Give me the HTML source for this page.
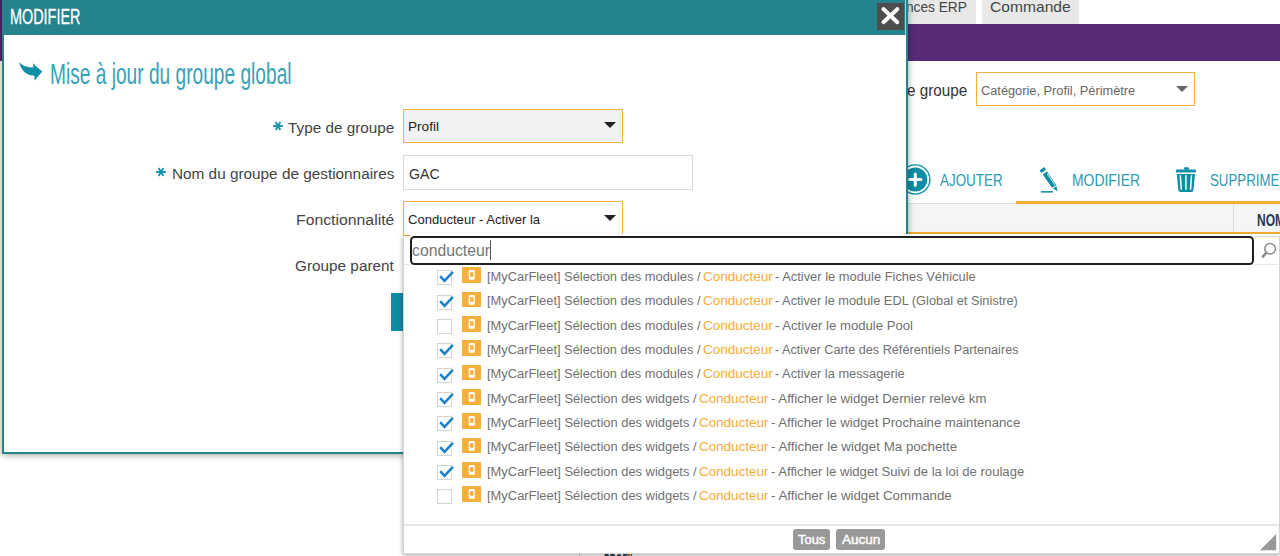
<!DOCTYPE html>
<html lang="fr"><head><meta charset="utf-8"><title>Modifier</title>
<style>
html,body{margin:0;padding:0}
body{width:1280px;height:556px;overflow:hidden;position:relative;background:#fff;font-family:"Liberation Sans",sans-serif}
.a{position:absolute;box-sizing:border-box}
.t{position:absolute;white-space:nowrap;line-height:1;transform-origin:0 0}
svg{position:absolute;overflow:visible}
.cb{position:absolute;box-sizing:border-box;width:15px;height:15px;border:1px solid #d4d4d4;background:#fff;left:437px}
.ic{position:absolute;left:462.3px;width:18.7px;height:15.8px;background:#f6b03a}
.sel{position:absolute;box-sizing:border-box;border:1px solid #f4af47;background:#fff}
.arr{position:absolute;width:0;height:0;border-left:6px solid transparent;border-right:6px solid transparent;border-top:6px solid #222}
</style></head>
<body>
<div class="a" style="left:0;top:0;width:2.4px;height:61px;background:#5a2370"></div>
<div class="a" style="left:880px;top:0;width:95.8px;height:23.6px;background:#e8e8e8"></div>
<div class="a" style="left:982px;top:0;width:97.2px;height:23.6px;background:#e8e8e8"></div>
<div class="a" style="left:900px;top:23.6px;width:380px;height:37.4px;background:#5b2a77"></div>
<span class="t" style="left:906.11px;top:-1px;font-size:15px;color:#444;transform:scaleX(0.9130);">nces ERP</span>
<span class="t" style="left:990.02px;top:-1px;font-size:15px;color:#444;transform:scaleX(1.0404);">Commande</span>
<span class="t" style="left:906.59px;top:83px;font-size:15.6px;color:#333;transform:scaleX(0.9765);">e groupe</span>
<div class="sel" style="left:976px;top:72px;width:219px;height:34px"></div>
<span class="t" style="left:980.96px;top:85px;font-size:12px;color:#666;transform:scaleX(1.0656);">Catégorie, Profil, Périmètre</span>
<div class="arr" style="left:1176px;top:86.3px;border-top-color:#666"></div>
<svg style="left:899px;top:163px" width="33" height="33" viewBox="0 0 33 33"><circle cx="16.3" cy="16.5" r="14.6" fill="none" stroke="#0d8ea4" stroke-width="1.3"/><circle cx="16.3" cy="16.5" r="12" fill="#0d8ea4"/><path d="M16.3 10.9v11.4M10.6 16.6h11.4" stroke="#fff" stroke-width="3" stroke-linecap="round"/></svg>
<span class="t" style="left:939.60px;top:173px;font-size:15.6px;color:#2a9bb1;transform:scaleX(0.8603);">AJOUTER</span>
<svg style="left:1036px;top:164px" width="26" height="32" viewBox="0 0 26 32">
<g transform="translate(6.8,6.05) rotate(-34.8)" fill="#0d8ea4">
<rect x="-2.95" y="-1.6" width="5.9" height="3.2" rx="0.9"/>
<rect x="-2.6" y="3.6" width="5.2" height="16.3"/>
<rect x="1.05" y="5.6" width="0.9" height="13.4" fill="#e3f2f4"/>
<path d="M-2.1 21h4.2L0 25.8z"/>
</g>
<rect x="4.9" y="27.1" width="12" height="1.5" fill="#0d8ea4"/>
</svg>
<span class="t" style="left:1071.89px;top:173px;font-size:15.6px;color:#2a9bb1;transform:scaleX(0.8929);">MODIFIER</span>
<svg style="left:1174px;top:166px" width="24" height="28" viewBox="0 0 24 28" fill="#0d8ea4">
<rect x="10" y="1.3" width="5" height="2.4" rx="1.1"/>
<rect x="1.8" y="3.6" width="20.2" height="3" rx="1.4"/>
<path d="M2.8 8h18.2l-1.6 16.2a2 2 0 0 1-2 1.8H6.4a2 2 0 0 1-2-1.8z"/>
<path d="M6.3 9.2l1 14.6M11.9 9.2v14.6M17.5 9.2l-1 14.6" stroke="#fff" stroke-width="1.5" fill="none"/>
</svg>
<span class="t" style="left:1209.70px;top:173px;font-size:15.6px;color:#2a9bb1;transform:scaleX(0.8526);clip-path:inset(0 12% 0 0);">SUPPRIMER</span>
<div class="a" style="left:908px;top:203px;width:372px;height:1px;background:#ddd"></div>
<div class="a" style="left:1016.4px;top:200.7px;width:264px;height:3px;background:#f5ad32"></div>
<div class="a" style="left:908px;top:203.8px;width:372px;height:28.2px;background:#f5f5f5"></div>
<div class="a" style="left:1233px;top:204px;width:1px;height:28px;background:#dcdcdc"></div>
<div class="a" style="left:908px;top:231.9px;width:372px;height:2.2px;background:#f5ad32"></div>
<span class="t" style="left:1257.22px;top:212px;font-size:16.2px;color:#2c3a4b;font-weight:bold;transform:scaleX(0.7435);">NOM</span>
<div class="a" style="left:579px;top:540px;width:1px;height:16px;background:#d0d0d0"></div>
<span class="t" style="left:603.75px;top:552px;font-size:16.2px;color:#2c3a4b;font-weight:bold;transform:scaleX(0.5239);">PROFIL</span>
<div class="a" style="left:2px;top:-2px;width:906.2px;height:456px;border:2px solid #25838d;background:#fff;box-shadow:0 1px 7px rgba(0,0,0,.38)"></div>
<div class="a" style="left:2px;top:0;width:903.2px;height:35px;background:#25838d"></div>
<div class="a" style="left:905.2px;top:0;width:1.3px;height:35px;background:#a9d2d6"></div>
<span class="t" style="left:9.55px;top:6px;font-size:22.3px;color:#fff;transform:scaleX(0.6463);-webkit-text-stroke:0.3px #fff;">MODIFIER</span>
<div class="a" style="left:877px;top:3px;width:27px;height:27px;background:#4d4d4d"></div>
<svg style="left:877px;top:3px" width="27" height="27" viewBox="0 0 27 27"><path d="M6.5 6.1L20.3 19.2M20.3 6.1L6.5 19.2" stroke="#fff" stroke-width="4" stroke-linecap="round"/></svg>
<svg style="left:18px;top:60px" width="26" height="22" viewBox="0 0 26 22"><path d="M1 2.3C5.2 6.4 10.5 7.8 15.6 7.3L14.6 3.2 24.3 11.4 16.6 20.4 16.3 15.4C9.6 16.2 3.6 11.6 1 2.3z" fill="#0d8ea4"/></svg>
<span class="t" style="left:49.72px;top:60px;font-size:28.6px;color:#38a1b7;transform:scaleX(0.6694);">Mise à jour du groupe global</span>
<svg style="left:271.70px;top:119.80px" width="12" height="12" viewBox="-6 -6 12 12"><path d="M-4.9 0H4.9M-2.35 -4.07L2.35 4.07M2.35 -4.07L-2.35 4.07" stroke="#1b94b1" stroke-width="1.9" fill="none"/></svg>
<span class="t" style="left:288.09px;top:120px;font-size:15.2px;color:#444;transform:scaleX(1.0071);">Type de groupe</span>
<svg style="left:155.20px;top:166.00px" width="12" height="12" viewBox="-6 -6 12 12"><path d="M-4.9 0H4.9M-2.35 -4.07L2.35 4.07M2.35 -4.07L-2.35 4.07" stroke="#1b94b1" stroke-width="1.9" fill="none"/></svg>
<span class="t" style="left:171.77px;top:166px;font-size:15.2px;color:#444;transform:scaleX(1.0091);">Nom du groupe de gestionnaires</span>
<span class="t" style="left:296.14px;top:212px;font-size:15.2px;color:#444;transform:scaleX(1.0397);">Fonctionnalité</span>
<span class="t" style="left:294.73px;top:258px;font-size:15.2px;color:#444;transform:scaleX(1.0090);">Groupe parent</span>
<div class="sel" style="left:403px;top:109px;width:220.3px;height:34px;background:#f2f2f2"></div>
<span class="t" style="left:408.31px;top:120px;font-size:13px;color:#222;transform:scaleX(1.0473);">Profil</span>
<div class="arr" style="left:604px;top:122px"></div>
<div class="a" style="left:403px;top:155px;width:290px;height:34.6px;border:1px solid #d9d9d9;background:#fff"></div>
<span class="t" style="left:409.29px;top:166px;font-size:15px;color:#333;transform:scaleX(0.9455);">GAC</span>
<div class="sel" style="left:403px;top:201px;width:220.3px;height:35px"></div>
<span class="t" style="left:408.45px;top:213px;font-size:13px;color:#222;transform:scaleX(1.0042);">Conducteur - Activer la</span>
<div class="arr" style="left:604px;top:214.6px"></div>
<div class="a" style="left:391.3px;top:292.7px;width:110px;height:38px;background:#0c8ca2"></div>
<span class="t" style="left:410.80px;top:304px;font-size:15px;color:#fff;">Enregistrer</span>
<div class="a" style="left:403px;top:236px;width:877px;height:318px;background:#fff;border:1px solid #d4d4d4;border-top:0;box-shadow:0 1px 5px rgba(0,0,0,.35)"></div>
<div class="a" style="left:410px;top:234.2px;width:870px;height:2px;background:#fff"></div>
<div class="a" style="left:404.3px;top:264px;width:874px;height:1px;background:#e6e6e6"></div>
<div class="a" style="left:1254.5px;top:235.8px;width:24.6px;height:1px;background:#dcdcdc"></div>
<div class="a" style="left:410px;top:236px;width:844px;height:29px;border:2px solid #1f1f1f;border-radius:4.5px;background:#fff"></div>
<span class="t" style="left:412.27px;top:242px;font-size:16.5px;color:#757575;transform:scaleX(0.9556);">conducteur</span>
<div class="a" style="left:490.2px;top:240px;width:1px;height:19.6px;background:#555"></div>
<svg style="left:1259px;top:240px" width="20" height="20" viewBox="0 0 20 20"><circle cx="11.1" cy="8.7" r="5.3" fill="none" stroke="#8c8c8c" stroke-width="1.5"/><path d="M7.2 12.9L3.9 16.6" stroke="#8c8c8c" stroke-width="2.6" stroke-linecap="round"/></svg>
<div class="cb" style="top:270.20px"></div>
<svg style="left:437px;top:270.20px" width="18" height="15" viewBox="0 0 18 15"><path d="M3.2 6.2l4.3 4.7 8.4-9" fill="none" stroke="#1c80cc" stroke-width="2.5"/></svg>
<div class="ic" style="top:267.20px"></div>
<svg style="left:462.3px;top:267.20px" width="19" height="16" viewBox="0 0 19 16"><rect x="6.7" y="3" width="6.1" height="9.8" rx="1.3" fill="#fff"/><rect x="8.1" y="5.2" width="3.3" height="4.6" fill="#f6b03a"/></svg>
<span class="t" style="left:486.60px;top:271px;font-size:12px;color:#707070;transform:scaleX(1.0710);">[MyCarFleet] Sélection des modules /</span>
<span class="t" style="left:702.92px;top:271px;font-size:12px;color:#f6ac38;transform:scaleX(1.1258);">Conducteur</span>
<span class="t" style="left:775.42px;top:271px;font-size:12px;color:#707070;transform:scaleX(1.0747);">- Activer le module Fiches Véhicule</span>
<div class="cb" style="top:294.55px"></div>
<svg style="left:437px;top:294.55px" width="18" height="15" viewBox="0 0 18 15"><path d="M3.2 6.2l4.3 4.7 8.4-9" fill="none" stroke="#1c80cc" stroke-width="2.5"/></svg>
<div class="ic" style="top:291.55px"></div>
<svg style="left:462.3px;top:291.55px" width="19" height="16" viewBox="0 0 19 16"><rect x="6.7" y="3" width="6.1" height="9.8" rx="1.3" fill="#fff"/><rect x="8.1" y="5.2" width="3.3" height="4.6" fill="#f6b03a"/></svg>
<span class="t" style="left:486.60px;top:295px;font-size:12px;color:#707070;transform:scaleX(1.0710);">[MyCarFleet] Sélection des modules /</span>
<span class="t" style="left:702.92px;top:295px;font-size:12px;color:#f6ac38;transform:scaleX(1.1258);">Conducteur</span>
<span class="t" style="left:775.42px;top:295px;font-size:12px;color:#707070;transform:scaleX(1.0668);">- Activer le module EDL (Global et Sinistre)</span>
<div class="cb" style="top:318.90px"></div>
<div class="ic" style="top:315.90px"></div>
<svg style="left:462.3px;top:315.90px" width="19" height="16" viewBox="0 0 19 16"><rect x="6.7" y="3" width="6.1" height="9.8" rx="1.3" fill="#fff"/><rect x="8.1" y="5.2" width="3.3" height="4.6" fill="#f6b03a"/></svg>
<span class="t" style="left:486.60px;top:320px;font-size:12px;color:#707070;transform:scaleX(1.0710);">[MyCarFleet] Sélection des modules /</span>
<span class="t" style="left:702.92px;top:320px;font-size:12px;color:#f6ac38;transform:scaleX(1.1258);">Conducteur</span>
<span class="t" style="left:775.41px;top:320px;font-size:12px;color:#707070;transform:scaleX(1.0943);">- Activer le module Pool</span>
<div class="cb" style="top:343.25px"></div>
<svg style="left:437px;top:343.25px" width="18" height="15" viewBox="0 0 18 15"><path d="M3.2 6.2l4.3 4.7 8.4-9" fill="none" stroke="#1c80cc" stroke-width="2.5"/></svg>
<div class="ic" style="top:340.25px"></div>
<svg style="left:462.3px;top:340.25px" width="19" height="16" viewBox="0 0 19 16"><rect x="6.7" y="3" width="6.1" height="9.8" rx="1.3" fill="#fff"/><rect x="8.1" y="5.2" width="3.3" height="4.6" fill="#f6b03a"/></svg>
<span class="t" style="left:486.60px;top:344px;font-size:12px;color:#707070;transform:scaleX(1.0710);">[MyCarFleet] Sélection des modules /</span>
<span class="t" style="left:702.92px;top:344px;font-size:12px;color:#f6ac38;transform:scaleX(1.1258);">Conducteur</span>
<span class="t" style="left:775.43px;top:344px;font-size:12px;color:#707070;transform:scaleX(1.0553);">- Activer Carte des Référentiels Partenaires</span>
<div class="cb" style="top:367.60px"></div>
<svg style="left:437px;top:367.60px" width="18" height="15" viewBox="0 0 18 15"><path d="M3.2 6.2l4.3 4.7 8.4-9" fill="none" stroke="#1c80cc" stroke-width="2.5"/></svg>
<div class="ic" style="top:364.60px"></div>
<svg style="left:462.3px;top:364.60px" width="19" height="16" viewBox="0 0 19 16"><rect x="6.7" y="3" width="6.1" height="9.8" rx="1.3" fill="#fff"/><rect x="8.1" y="5.2" width="3.3" height="4.6" fill="#f6b03a"/></svg>
<span class="t" style="left:486.60px;top:368px;font-size:12px;color:#707070;transform:scaleX(1.0710);">[MyCarFleet] Sélection des modules /</span>
<span class="t" style="left:702.92px;top:368px;font-size:12px;color:#f6ac38;transform:scaleX(1.1258);">Conducteur</span>
<span class="t" style="left:775.42px;top:368px;font-size:12px;color:#707070;transform:scaleX(1.0682);">- Activer la messagerie</span>
<div class="cb" style="top:391.95px"></div>
<svg style="left:437px;top:391.95px" width="18" height="15" viewBox="0 0 18 15"><path d="M3.2 6.2l4.3 4.7 8.4-9" fill="none" stroke="#1c80cc" stroke-width="2.5"/></svg>
<div class="ic" style="top:388.95px"></div>
<svg style="left:462.3px;top:388.95px" width="19" height="16" viewBox="0 0 19 16"><rect x="6.7" y="3" width="6.1" height="9.8" rx="1.3" fill="#fff"/><rect x="8.1" y="5.2" width="3.3" height="4.6" fill="#f6b03a"/></svg>
<span class="t" style="left:486.60px;top:393px;font-size:12px;color:#707070;transform:scaleX(1.0762);">[MyCarFleet] Sélection des widgets /</span>
<span class="t" style="left:698.93px;top:393px;font-size:12px;color:#f6ac38;transform:scaleX(1.1176);">Conducteur</span>
<span class="t" style="left:770.91px;top:393px;font-size:12px;color:#707070;transform:scaleX(1.0998);">- Afficher le widget Dernier relevé km</span>
<div class="cb" style="top:416.30px"></div>
<svg style="left:437px;top:416.30px" width="18" height="15" viewBox="0 0 18 15"><path d="M3.2 6.2l4.3 4.7 8.4-9" fill="none" stroke="#1c80cc" stroke-width="2.5"/></svg>
<div class="ic" style="top:413.30px"></div>
<svg style="left:462.3px;top:413.30px" width="19" height="16" viewBox="0 0 19 16"><rect x="6.7" y="3" width="6.1" height="9.8" rx="1.3" fill="#fff"/><rect x="8.1" y="5.2" width="3.3" height="4.6" fill="#f6b03a"/></svg>
<span class="t" style="left:486.60px;top:417px;font-size:12px;color:#707070;transform:scaleX(1.0762);">[MyCarFleet] Sélection des widgets /</span>
<span class="t" style="left:698.93px;top:417px;font-size:12px;color:#f6ac38;transform:scaleX(1.1176);">Conducteur</span>
<span class="t" style="left:770.91px;top:417px;font-size:12px;color:#707070;transform:scaleX(1.0967);">- Afficher le widget Prochaine maintenance</span>
<div class="cb" style="top:440.65px"></div>
<svg style="left:437px;top:440.65px" width="18" height="15" viewBox="0 0 18 15"><path d="M3.2 6.2l4.3 4.7 8.4-9" fill="none" stroke="#1c80cc" stroke-width="2.5"/></svg>
<div class="ic" style="top:437.65px"></div>
<svg style="left:462.3px;top:437.65px" width="19" height="16" viewBox="0 0 19 16"><rect x="6.7" y="3" width="6.1" height="9.8" rx="1.3" fill="#fff"/><rect x="8.1" y="5.2" width="3.3" height="4.6" fill="#f6b03a"/></svg>
<span class="t" style="left:486.60px;top:441px;font-size:12px;color:#707070;transform:scaleX(1.0762);">[MyCarFleet] Sélection des widgets /</span>
<span class="t" style="left:698.93px;top:441px;font-size:12px;color:#f6ac38;transform:scaleX(1.1176);">Conducteur</span>
<span class="t" style="left:770.90px;top:441px;font-size:12px;color:#707070;transform:scaleX(1.1135);">- Afficher le widget Ma pochette</span>
<div class="cb" style="top:465.00px"></div>
<svg style="left:437px;top:465.00px" width="18" height="15" viewBox="0 0 18 15"><path d="M3.2 6.2l4.3 4.7 8.4-9" fill="none" stroke="#1c80cc" stroke-width="2.5"/></svg>
<div class="ic" style="top:462.00px"></div>
<svg style="left:462.3px;top:462.00px" width="19" height="16" viewBox="0 0 19 16"><rect x="6.7" y="3" width="6.1" height="9.8" rx="1.3" fill="#fff"/><rect x="8.1" y="5.2" width="3.3" height="4.6" fill="#f6b03a"/></svg>
<span class="t" style="left:486.60px;top:466px;font-size:12px;color:#707070;transform:scaleX(1.0762);">[MyCarFleet] Sélection des widgets /</span>
<span class="t" style="left:698.93px;top:466px;font-size:12px;color:#f6ac38;transform:scaleX(1.1176);">Conducteur</span>
<span class="t" style="left:770.91px;top:466px;font-size:12px;color:#707070;transform:scaleX(1.0918);">- Afficher le widget Suivi de la loi de roulage</span>
<div class="cb" style="top:489.35px"></div>
<div class="ic" style="top:486.35px"></div>
<svg style="left:462.3px;top:486.35px" width="19" height="16" viewBox="0 0 19 16"><rect x="6.7" y="3" width="6.1" height="9.8" rx="1.3" fill="#fff"/><rect x="8.1" y="5.2" width="3.3" height="4.6" fill="#f6b03a"/></svg>
<span class="t" style="left:486.60px;top:490px;font-size:12px;color:#707070;transform:scaleX(1.0762);">[MyCarFleet] Sélection des widgets /</span>
<span class="t" style="left:698.93px;top:490px;font-size:12px;color:#f6ac38;transform:scaleX(1.1176);">Conducteur</span>
<span class="t" style="left:770.90px;top:490px;font-size:12px;color:#707070;transform:scaleX(1.1072);">- Afficher le widget Commande</span>
<div class="a" style="left:404.3px;top:524.2px;width:874.4px;height:1.7px;background:#e6e6e6"></div>
<div class="a" style="left:792.7px;top:529px;width:37.6px;height:21px;background:#999;border-radius:3px"></div>
<span class="t" style="left:797.74px;top:533px;font-size:13.2px;color:#fff;transform:scaleX(0.9806);-webkit-text-stroke:0.45px #fff;">Tous</span>
<div class="a" style="left:836px;top:529px;width:49px;height:21px;background:#999;border-radius:3px"></div>
<span class="t" style="left:841.90px;top:533px;font-size:13.2px;color:#fff;transform:scaleX(1.0256);-webkit-text-stroke:0.45px #fff;">Aucun</span>
<svg style="left:1260px;top:534px" width="17" height="17" viewBox="0 0 17 17"><path d="M16.2 0V16.2H0z" fill="#999"/></svg>
</body></html>
